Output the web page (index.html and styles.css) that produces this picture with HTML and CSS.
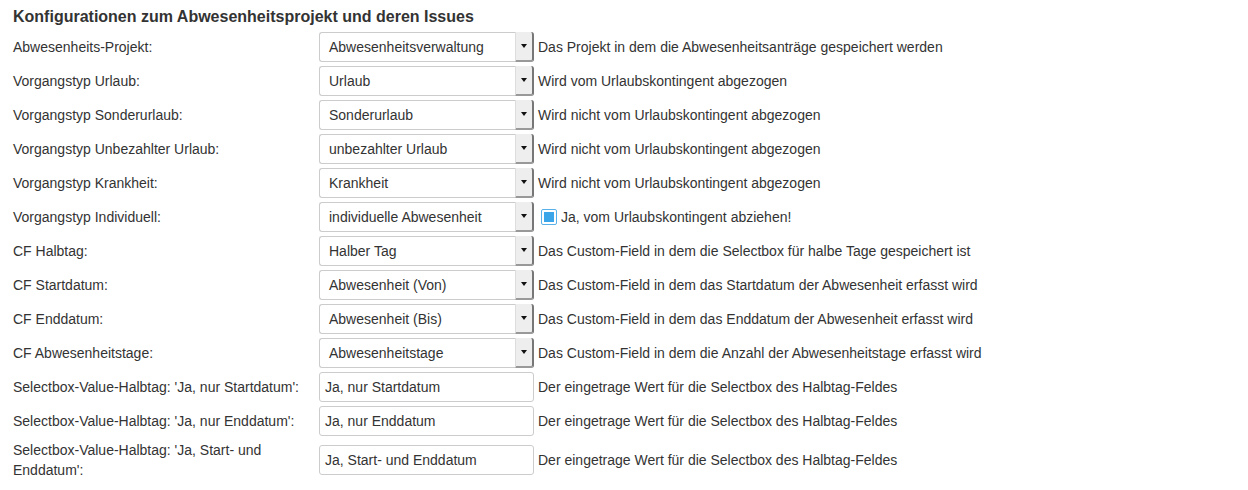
FILE: index.html
```html
<!DOCTYPE html>
<html lang="de">
<head>
<meta charset="utf-8">
<title>Konfiguration</title>
<link rel="stylesheet" href="styles.css">
</head>
<body>
<h3 class="title">Konfigurationen zum Abwesenheitsprojekt und deren Issues</h3>
<div class="form">
  <div class="row"><div class="label">Abwesenheits-Projekt:</div><div class="select"><span class="val">Abwesenheitsverwaltung</span><span class="btn"><span class="tri"></span></span></div><div class="desc">Das Projekt in dem die Abwesenheitsanträge gespeichert werden</div></div>
  <div class="row"><div class="label">Vorgangstyp Urlaub:</div><div class="select"><span class="val">Urlaub</span><span class="btn"><span class="tri"></span></span></div><div class="desc">Wird vom Urlaubskontingent abgezogen</div></div>
  <div class="row"><div class="label">Vorgangstyp Sonderurlaub:</div><div class="select"><span class="val">Sonderurlaub</span><span class="btn"><span class="tri"></span></span></div><div class="desc">Wird nicht vom Urlaubskontingent abgezogen</div></div>
  <div class="row"><div class="label">Vorgangstyp Unbezahlter Urlaub:</div><div class="select"><span class="val">unbezahlter Urlaub</span><span class="btn"><span class="tri"></span></span></div><div class="desc">Wird nicht vom Urlaubskontingent abgezogen</div></div>
  <div class="row"><div class="label">Vorgangstyp Krankheit:</div><div class="select"><span class="val">Krankheit</span><span class="btn"><span class="tri"></span></span></div><div class="desc">Wird nicht vom Urlaubskontingent abgezogen</div></div>
  <div class="row"><div class="label">Vorgangstyp Individuell:</div><div class="select"><span class="val">individuelle Abwesenheit</span><span class="btn"><span class="tri"></span></span></div><div class="desc check"><span class="box"><span class="fill"></span></span>Ja, vom Urlaubskontingent abziehen!</div></div>
  <div class="row"><div class="label">CF Halbtag:</div><div class="select"><span class="val">Halber Tag</span><span class="btn"><span class="tri"></span></span></div><div class="desc">Das Custom-Field in dem die Selectbox für halbe Tage gespeichert ist</div></div>
  <div class="row"><div class="label">CF Startdatum:</div><div class="select"><span class="val">Abwesenheit (Von)</span><span class="btn"><span class="tri"></span></span></div><div class="desc">Das Custom-Field in dem das Startdatum der Abwesenheit erfasst wird</div></div>
  <div class="row"><div class="label">CF Enddatum:</div><div class="select"><span class="val">Abwesenheit (Bis)</span><span class="btn"><span class="tri"></span></span></div><div class="desc">Das Custom-Field in dem das Enddatum der Abwesenheit erfasst wird</div></div>
  <div class="row"><div class="label">CF Abwesenheitstage:</div><div class="select"><span class="val">Abwesenheitstage</span><span class="btn"><span class="tri"></span></span></div><div class="desc">Das Custom-Field in dem die Anzahl der Abwesenheitstage erfasst wird</div></div>
  <div class="row"><div class="label">Selectbox-Value-Halbtag: 'Ja, nur Startdatum':</div><div class="input">Ja, nur Startdatum</div><div class="desc">Der eingetrage Wert für die Selectbox des Halbtag-Feldes</div></div>
  <div class="row"><div class="label">Selectbox-Value-Halbtag: 'Ja, nur Enddatum':</div><div class="input">Ja, nur Enddatum</div><div class="desc">Der eingetrage Wert für die Selectbox des Halbtag-Feldes</div></div>
  <div class="row"><div class="label">Selectbox-Value-Halbtag: 'Ja, Start- und Enddatum':</div><div class="input">Ja, Start- und Enddatum</div><div class="desc">Der eingetrage Wert für die Selectbox des Halbtag-Feldes</div></div>
</div>
</body>
</html>
```
FILE: styles.css
```css
html, body {
  margin: 0;
  padding: 0;
  background: #fff;
}
body {
  font-family: "Liberation Sans", Arial, sans-serif;
  font-size: 14px;
  color: #333;
  padding: 0 13px;
}
.title {
  margin: 0;
  padding-top: 8px;
  height: 24px;
  font-size: 16px;
  line-height: 18px;
  font-weight: bold;
  color: #333;
}
.form {
  display: flex;
  flex-direction: column;
  gap: 4px;
}
.row {
  display: grid;
  grid-template-columns: 302px 215px auto;
  column-gap: 4px;
  align-items: center;
}
.label {
  line-height: 20px;
}
.select {
  height: 30px;
  box-sizing: border-box;
  border: 1px solid #ccc;
  border-right: none;
  border-radius: 3px;
  display: flex;
  align-items: stretch;
}
.select .val {
  flex: 1;
  padding-left: 9px;
  display: flex;
  align-items: center;
}
.btn {
  width: 19px;
  background: #eeeeee;
  border-left: 1px solid #ddd;
  border-right: 2px solid #777;
  border-bottom: 2px solid #999;
  box-sizing: border-box;
  display: flex;
  align-items: center;
  justify-content: center;
  margin-top: -1px;
  margin-bottom: -1px;
  border-radius: 0 3px 3px 0;
}
.tri {
  width: 0;
  height: 0;
  border-left: 3px solid transparent;
  border-right: 3px solid transparent;
  border-top: 4px solid #111;
}
.input {
  height: 30px;
  box-sizing: border-box;
  border: 1px solid #ccc;
  border-radius: 3px;
  padding-left: 5px;
  display: flex;
  align-items: center;
}
.desc {
  white-space: nowrap;
}
.check {
  display: flex;
  align-items: center;
  gap: 4px;
  padding-left: 3px;
}
.box {
  width: 16px;
  height: 16px;
  box-sizing: border-box;
  border: 1px solid #5ab0e8;
  border-radius: 2px;
  padding: 2px;
  background: #fff;
  display: flex;
}
.fill {
  flex: 1;
  background: #3aa5e8;
}
```
